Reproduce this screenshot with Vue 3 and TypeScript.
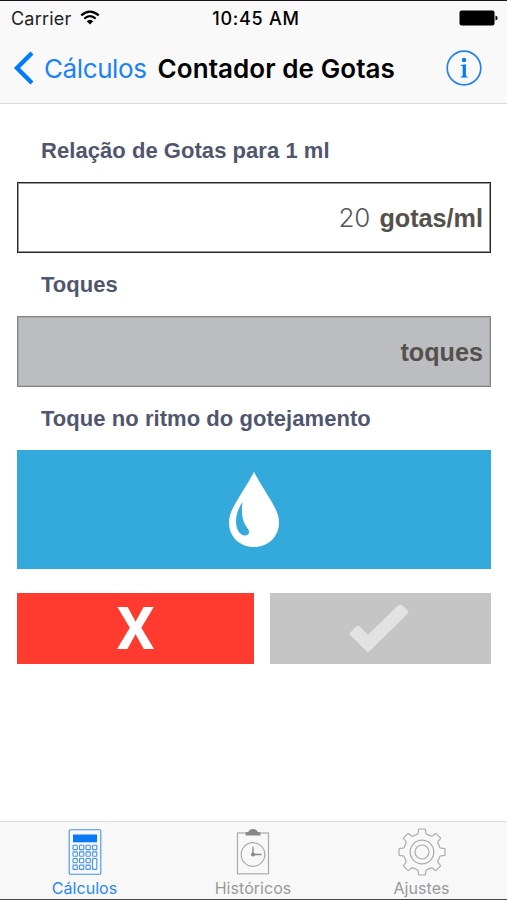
<script setup lang="ts">
import { ref } from 'vue'

const dropsPerMl = ref(20)
const taps = ref<number | null>(null)

function gearPath(cx: number, cy: number, outer: number, inner: number): string {
  const points: string[] = []
  const profile: [number, number][] = [
    [-14.5, inner],
    [-11, inner + 1.2],
    [-9.5, outer - 1],
    [-7.5, outer],
    [7.5, outer],
    [9.5, outer - 1],
    [11, inner + 1.2],
    [14.5, inner],
  ]
  for (let tooth = 0; tooth < 8; tooth++) {
    for (const [offset, radius] of profile) {
      const angle = ((tooth * 45 + offset) * Math.PI) / 180
      points.push(`${(cx + radius * Math.sin(angle)).toFixed(2)} ${(cy - radius * Math.cos(angle)).toFixed(2)}`)
    }
  }
  return `M${points.join('L')}Z`
}

const gear = gearPath(24, 24, 23.2, 18.4)
const keys = [0, 1, 2, 3].flatMap((row) =>
  [0, 1, 2, 3].filter((col) => !(col === 3 && row > 1)).map((col) => ({ x: 5 + col * 6.5, y: 17.3 + row * 6.6 })),
)
</script>

<template>
  <div class="screen">
    <div class="status">
      <div class="carrier">
        <span class="carrier-name">Carrier</span>
        <svg class="wifi" width="20" height="16" viewBox="0 0 20 16">
          <path d="M1.2 5.4Q10-2.3 18.8 5.4M4.3 8.6Q10 3.8 15.7 8.6" fill="none" stroke="#000" stroke-width="2.2" />
          <path d="M6.7 11.3Q10 8.3 13.3 11.3L10 14.6Z" />
        </svg>
      </div>
      <span class="clock">10:45 AM</span>
      <svg class="battery" width="39" height="16" viewBox="0 0 39 16">
        <rect x=".5" y=".5" width="35" height="15" rx="2" />
        <path d="M36.5 5.5Q38.6 6 38.6 8T36.5 10.5Z" />
      </svg>
    </div>

    <header class="nav">
      <button class="back">
        <svg width="20" height="34" viewBox="0 0 20 34">
          <path d="M19 2L4 17L19 32" fill="none" stroke="#007aff" stroke-width="4.4" />
        </svg>
        <span>Cálculos</span>
      </button>
      <h1>Contador de Gotas</h1>
      <button class="info">
        <svg width="36" height="36" viewBox="0 0 36 36">
          <circle cx="18" cy="18" r="16.8" fill="none" stroke="#2482f5" stroke-width="1.7" />
          <circle cx="18" cy="10" r="2.2" fill="#007aff" />
          <path d="M14.8 15L19.9 14.2V26L21.6 26.8V27.5H14.8V26.8L16.7 26V16L14.8 15.7Z" fill="#007aff" />
        </svg>
      </button>
    </header>

    <main>
      <h2>Relação de Gotas para 1 ml</h2>
      <div class="field">
        <span class="value">{{ dropsPerMl }}</span>
        <span class="unit">gotas/ml</span>
      </div>
      <h2>Toques</h2>
      <div class="field locked">
        <span v-if="taps !== null" class="value">{{ taps }}</span>
        <span class="unit">toques</span>
      </div>
      <h2>Toque no ritmo do gotejamento</h2>
      <button class="tap">
        <svg width="52" height="78" viewBox="0 0 52 78">
          <path d="M26 1C28 5 34 15 42 28C48 38 51 44 51 51.5C51 66 40 76 26 76S1 66 1 51.5C1 44 4 38 10 28C18 15 24 5 26 1Z" fill="#fff" />
          <path d="M14.5 31C13.5 38 13.7 44 15.5 50C17 55 21.2 58.5 21.2 60.8C21.2 63 19.2 64.5 17 64.5C11.5 64.5 8 58 8 50.5C8 43 11 36 14.5 31Z" fill="#34aadc" />
        </svg>
      </button>
      <div class="actions">
        <button class="cancel"><span>X</span></button>
        <button class="confirm">
          <svg width="60" height="50" viewBox="0 0 60 50">
            <path d="M1.2 28.5L7.2 22.5Q9 20.9 10.8 22.5L19 30.8L48.8 1.8Q51.4-.1 53.8 1.8L58.5 6.5Q60 8.4 58.4 10L20.2 47.4Q19 48.3 17.8 47.4L1.2 31Q0 29.8 1.2 28.5Z" fill="#e2e2e2" />
          </svg>
        </button>
      </div>
    </main>

    <footer class="tabs">
      <button class="tab active">
        <svg width="34" height="48" viewBox="0 0 34 48">
          <g fill="none" stroke="#4593ef" stroke-width="1.1">
            <rect x="1.2" y="1.8" width="31.6" height="44.4" rx="1" />
            <rect v-for="(key, i) in keys" :key="i" :x="key.x" :y="key.y" width="4.3" height="4.3" rx=".7" />
            <rect x="24.5" y="30.5" width="4.3" height="10.9" rx=".7" />
          </g>
          <rect x="5" y="6.5" width="24" height="7.8" fill="#087bf4" />
        </svg>
        <span class="tab-name">Cálculos</span>
      </button>
      <button class="tab">
        <svg width="34" height="48" viewBox="0 0 34 48">
          <g fill="none" stroke="#aaa" stroke-width="1.2">
            <rect x="1.5" y="5" width="31" height="40.8" />
            <circle cx="17" cy="26.5" r="11.8" />
          </g>
          <path d="M9.5 7.5V4.5L12.5 3.7Q13.3 1 17 1T21.5 3.7L24.5 4.5V7.5Z" fill="#888" />
          <path d="M17 18.7V26.5H25.5" fill="none" stroke="#888" stroke-width="1.3" />
          <circle cx="17" cy="26.5" r="2" fill="#888" />
        </svg>
        <span class="tab-name">Históricos</span>
      </button>
      <button class="tab">
        <svg width="48" height="48" viewBox="0 0 48 48">
          <g fill="none" stroke="#aaa" stroke-width="1.2" stroke-linejoin="round">
            <path :d="gear" />
            <circle cx="24" cy="24" r="11.8" />
            <circle cx="24" cy="24" r="7" />
          </g>
        </svg>
        <span class="tab-name">Ajustes</span>
      </button>
    </footer>
  </div>
</template>

<style>
body {
  margin: 0;
  background: #fff;
}
</style>

<style scoped>
.screen {
  width: 507px;
  height: 900px;
  box-sizing: border-box;
  display: flex;
  flex-direction: column;
  background: #fff;
  border-top: 1px solid #161419;
  border-bottom: 1px solid #47474a;
  font-family: Inter, "Liberation Sans", sans-serif;
  overflow: hidden;
}
button {
  border: 0;
  padding: 0;
  margin: 0;
  background: none;
  font: inherit;
  display: flex;
}
svg {
  display: block;
  flex: none;
}
.status {
  height: 34px;
  box-sizing: border-box;
  padding: 0 9px 0 11px;
  display: grid;
  grid-template-columns: 1fr auto 1fr;
  align-items: center;
  background: #f9f9f9;
}
.carrier {
  display: flex;
  align-items: center;
  gap: 9px;
}
.carrier-name {
  font-size: 18px;
  color: #222;
  letter-spacing: 0.2px;
}
.clock {
  margin-left: 3px;
  font-size: 18px;
  font-weight: 550;
  letter-spacing: 0.75px;
}
.battery {
  justify-self: end;
}
.nav {
  height: 69px;
  box-sizing: border-box;
  padding: 0 25px 2px 13px;
  display: flex;
  align-items: center;
  background: #f9f9f9;
  border-bottom: 1px solid #d9d9d9;
  white-space: nowrap;
}
.back {
  align-items: center;
  gap: 11px;
  color: #1a83fb;
  font-size: 26px;
  letter-spacing: -0.4px;
}
h1 {
  margin: 0 0 0 11px;
  font-size: 26px;
  font-weight: 600;
  letter-spacing: 0.08px;
}
.info {
  margin-left: auto;
}
main {
  flex: 1;
  padding: 31px 16px 0 17px;
}
h2 {
  margin: 0;
  padding-left: 24px;
  height: 32px;
  font: bold 22px/32px "Liberation Sans", Arial, sans-serif;
  letter-spacing: 0.05px;
  color: #50566e;
  white-space: nowrap;
}
.field {
  height: 71px;
  box-sizing: border-box;
  margin: 15px 0 16px;
  padding-right: 7px;
  border: 1px solid #252525;
  box-shadow: inset 0 0 0 1px rgba(0, 0, 0, 0.4);
  display: flex;
  align-items: center;
  justify-content: flex-end;
  gap: 9px;
}
.locked {
  background: #bcbdc1;
  border-color: #858585;
  box-shadow: inset 0 0 0 1px rgba(0, 0, 0, 0.1);
}
.value {
  font-size: 26px;
  font-weight: 300;
  color: #555;
}
.unit {
  font: bold 25.2px/30px "Liberation Sans", Arial, sans-serif;
  color: #54514c;
}
.tap {
  width: 100%;
  height: 119px;
  margin-top: 15px;
  align-items: center;
  justify-content: center;
  background: #34aadc;
}
.actions {
  display: grid;
  grid-template-columns: 237px 1fr;
  gap: 16px;
  margin-top: 24px;
}
.actions button {
  height: 71px;
  align-items: center;
  justify-content: center;
}
.cancel {
  background: #ff3b30;
  color: #fff;
  font: bold 60px/71px Roboto, sans-serif;
}
.confirm {
  padding-right: 3px;
  background: #c5c5c5;
}
.tabs {
  height: 78px;
  box-sizing: border-box;
  border-top: 1px solid #dcdcdc;
  background: #f8f8f8;
  display: grid;
  grid-template-columns: 169px 168px 169px;
  padding-top: 6px;
}
.tab {
  flex-direction: column;
  align-items: center;
  color: #999;
  font-size: 16px;
  line-height: 24px;
}
.tab-name {
  letter-spacing: 0.05px;
}
.active {
  color: #2788f6;
}
</style>
